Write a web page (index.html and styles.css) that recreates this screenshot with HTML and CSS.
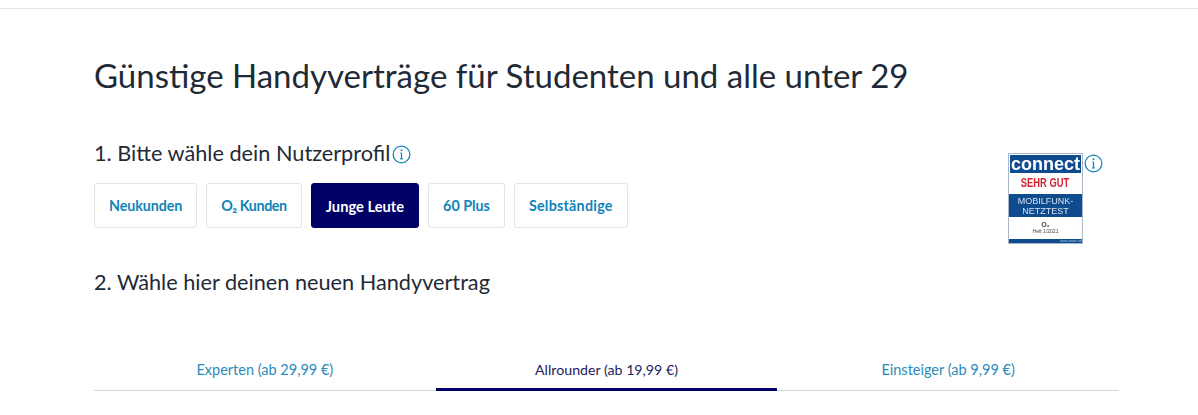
FILE: index.html
```html
<!DOCTYPE html>
<html lang="de">
<head>
    <meta charset="UTF-8">
    <meta name="viewport" content="width=device-width, initial-scale=1.0">
    <title>Günstige Handyverträge</title>
    <link rel="stylesheet" href="styles.css">
</head>
<body>
    <div class="page">
        <h1 class="page-title">Günstige Handyverträge für Studenten und alle unter 29</h1>

        <div class="profile-row">
            <div class="profile-main">
                <h2 class="step-title">1. Bitte wähle dein Nutzerprofil<svg class="info-icon" viewBox="0 0 20 20" aria-hidden="true"><circle cx="10" cy="10" r="8.8"/><path d="M10 8.6v6M8.6 14.6h2.8M8.8 8.6H10"/><circle class="dot" cx="10" cy="5.6" r="1"/></svg></h2>
                <div class="profile-buttons">
                    <button class="profile-button first">Neukunden</button>
                    <button class="profile-button tight">O₂ Kunden</button>
                    <button class="profile-button active">Junge Leute</button>
                    <button class="profile-button">60 Plus</button>
                    <button class="profile-button wide">Selbständige</button>
                </div>
                <h2 class="step-title step-two">2. Wähle hier deinen neuen Handyvertrag</h2>
            </div>

            <div class="award">
                <div class="seal">
                    <div class="seal-brand">connect</div>
                    <div class="seal-grade"><span>SEHR GUT</span></div>
                    <div class="seal-test">MOBILFUNK-<br>NETZTEST</div>
                    <div class="seal-info"><b>O₂</b><br>Heft 1/2021</div>
                    <div class="seal-foot">www.connect.de</div>
                </div>
                <svg class="info-icon award-info" viewBox="0 0 20 20" aria-hidden="true"><circle cx="10" cy="10" r="8.8"/><path d="M10 8.6v6M8.6 14.6h2.8M8.8 8.6H10"/><circle class="dot" cx="10" cy="5.6" r="1"/></svg>
            </div>
        </div>

        <div class="tabs">
            <div class="tab">Experten (ab 29,99 €)</div>
            <div class="tab active">Allrounder (ab 19,99 €)</div>
            <div class="tab">Einsteiger (ab 9,99 €)</div>
        </div>
    </div>
</body>
</html>
```

FILE: styles.css
```css
html, body {
    margin: 0;
    padding: 0;
    background: #fff;
    height: 415px;
    overflow: hidden;
    font-family: Lato, "Noto Sans", Arial, sans-serif;
    color: #1f2a37;
}

.page {
    margin-top: 8px;
    border-top: 1px solid #e4e6ea;
    padding: 0 95px 0 94px;
}

.page-title {
    margin: 46px 0 0;
    font-size: 33px;
    line-height: 40px;
    font-weight: 400;
}

.profile-row {
    display: flex;
    justify-content: space-between;
    margin-top: 43px;
}

.step-title {
    margin: 0;
    font-size: 21.7px;
    line-height: 30px;
    font-weight: 400;
}

.step-title .info-icon {
    margin-left: 2px;
}

.step-two {
    margin-top: 39px;
}

.info-icon {
    width: 19px;
    height: 19px;
    vertical-align: -3px;
    fill: none;
    stroke: #0f84b8;
    stroke-width: 1.3;
}

.info-icon .dot {
    fill: #0f84b8;
    stroke: none;
}

/* 按鈕 */
.profile-buttons {
    display: flex;
    gap: 9px;
    margin-top: 15px;
}

.profile-button {
    height: 45px;
    padding: 0 14px;
    background: #fff;
    color: #0f84b8;
    border: 1px solid #e2e4e8;
    border-radius: 3px;
    font-family: inherit;
    font-size: 14.3px;
    font-weight: 700;
}

.profile-button.first {
    letter-spacing: -0.1px;
}

.profile-button.tight {
    letter-spacing: -0.4px;
}

.profile-button.wide {
    letter-spacing: 0.25px;
}

.profile-button.active {
    background: #000066;
    border-color: #000066;
    color: #fff;
    font-size: 14.7px;
}

/* connect seal */
.award {
    display: flex;
    align-items: flex-start;
    gap: 1px;
    margin-top: 15px;
}

.seal {
    width: 75px;
    height: 91px;
    border: 1px solid #a9b6c8;
    box-sizing: border-box;
    background: #fff;
    text-align: center;
    font-family: "Liberation Sans", Arial, sans-serif;
    display: flex;
    flex-direction: column;
    filter: blur(0.3px);
}

.seal-brand {
    background: #0f4c8f;
    color: #fff;
    font-size: 18px;
    line-height: 18px;
    font-weight: 700;
    margin: 1px 1px 0;
}

.seal-grade {
    color: #d2232f;
    font-size: 12px;
    line-height: 21px;
    font-weight: 700;
}

.seal-grade span {
    display: inline-block;
    transform: scaleX(0.78);
}

.seal-test {
    background: #0f4c8f;
    color: #d5e0ef;
    font-size: 9px;
    line-height: 10px;
    padding: 2px 0 1px;
}

.seal-info {
    flex: 1;
    font-size: 5px;
    line-height: 6px;
    color: #444;
    padding-top: 5px;
}

.seal-info b {
    font-size: 7px;
}

.seal-foot {
    background: #0f4c8f;
    color: #b9c8dc;
    font-size: 3px;
    line-height: 4px;
    text-align: right;
}

.award-info {
    margin-top: 1px;
}

/* tabs */
.tabs {
    display: grid;
    grid-template-columns: repeat(3, 1fr);
    width: 1025px;
    margin-top: 62px;
    border-bottom: 1px solid #d5d8dd;
}

.tab {
    height: 29px;
    text-align: center;
    line-height: 22px;
    font-size: 14.5px;
    color: #2b8cbb;
}

.tab.active {
    color: #1c1c5e;
    font-size: 14.2px;
    border-bottom: 3px solid #000066;
    margin-bottom: -1px;
}
```
